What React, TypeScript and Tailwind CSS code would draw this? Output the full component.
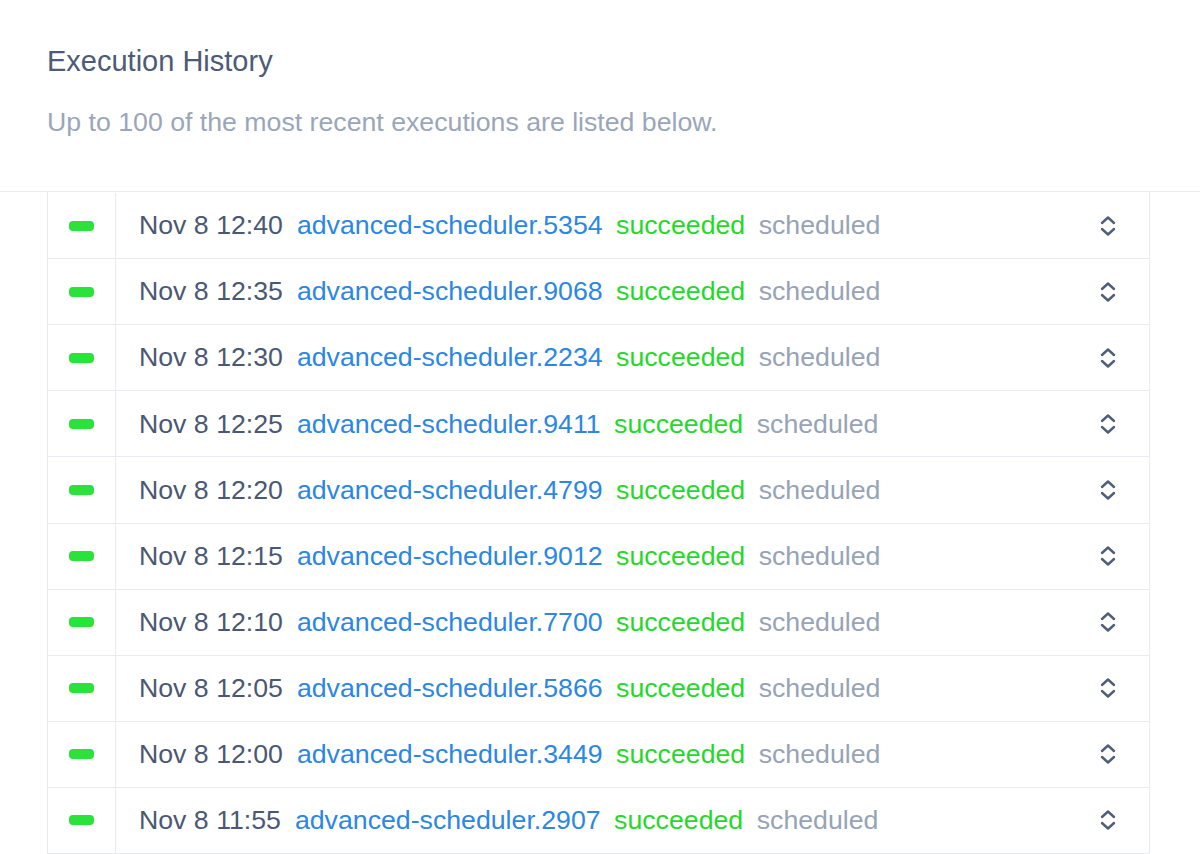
import React from "react";

const rows = [
  ["Nov 8 12:40", "advanced-scheduler.5354"],
  ["Nov 8 12:35", "advanced-scheduler.9068"],
  ["Nov 8 12:30", "advanced-scheduler.2234"],
  ["Nov 8 12:25", "advanced-scheduler.9411"],
  ["Nov 8 12:20", "advanced-scheduler.4799"],
  ["Nov 8 12:15", "advanced-scheduler.9012"],
  ["Nov 8 12:10", "advanced-scheduler.7700"],
  ["Nov 8 12:05", "advanced-scheduler.5866"],
  ["Nov 8 12:00", "advanced-scheduler.3449"],
  ["Nov 8 11:55", "advanced-scheduler.2907"],
];

function Chevrons() {
  return (
    <svg width="16" height="22" viewBox="0 0 16 22" fill="none" stroke="#4f5e7a" strokeWidth="2.4" strokeLinecap="round" strokeLinejoin="round">
      <path d="M2 8 L8 2.5 L14 8" />
      <path d="M2 14 L8 19.5 L14 14" />
    </svg>
  );
}

export default function App() {
  return (
    <div className="w-[1200px] h-[854px] overflow-hidden bg-white" style={{ fontFamily: '"Liberation Sans", Arial, sans-serif' }}>
      <div className="h-[192px] border-b border-[#e8ebf1] pl-[47px] pt-[47px]">
        <div className="text-[29px] leading-none text-[#4d5b76]">Execution History</div>
        <div className="mt-[33px] text-[26.7px] leading-none text-[#9aa6b9]">Up to 100 of the most recent executions are listed below.</div>
      </div>
      <div className="ml-[47px] w-[1103px] border-x border-[#e8ebf1]">
        {rows.map(([d, n], i) => (
          <div key={i} className={`flex items-center border-b border-[#e8ebf1] ${i === 0 ? "h-[67.2px] pt-[1px]" : "h-[66.1px]"}`}>
            <div className="flex h-full w-[68px] items-center justify-center border-r border-[#e8ebf1]">
              <div className="h-[10px] w-[25px] rounded-[4px] bg-[#2ae33a]" />
            </div>
            <div className="flex flex-1 items-center pl-[23px] pr-[33px] text-[26.7px] leading-none">
              <span className="text-[#4a5874]">{d}</span>
              <span className="ml-[14px] text-[#2b86e6]">{n}</span>
              <span className="ml-[13.5px] text-[#26d82a]">succeeded</span>
              <span className="ml-[13.5px] text-[#97a3b6]">scheduled</span>
              <span className="ml-auto flex items-center"><Chevrons /></span>
            </div>
          </div>
        ))}
      </div>
    </div>
  );
}
